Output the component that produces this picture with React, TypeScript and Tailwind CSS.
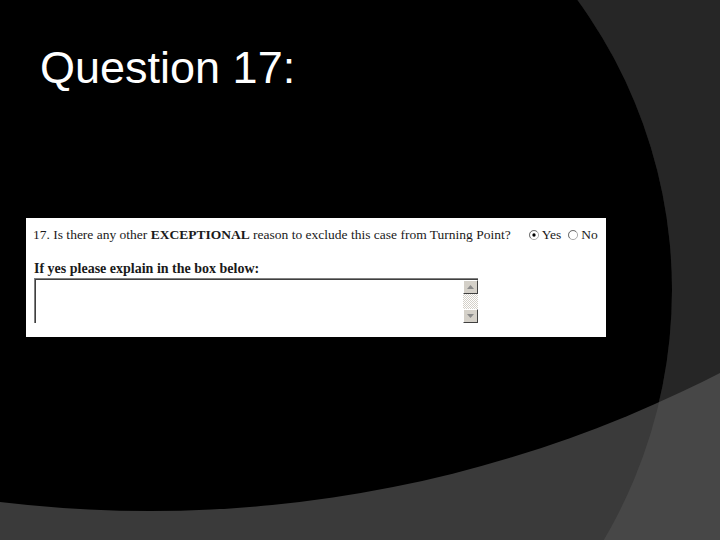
import React from "react";

// Slide backdrop: two big overlapping circles cut the page into four tones
const SlideBackdrop: React.FC = () => (
  <svg
    className="absolute inset-0"
    width="720"
    height="540"
    viewBox="0 0 720 540"
  >
    <defs>
      <clipPath id="upperArc">
        <circle cx="150" cy="-735" r="1246" />
      </clipPath>
    </defs>
    <rect x="0" y="0" width="720" height="540" fill="#474747" />
    <circle cx="150" cy="-735" r="1246" fill="#262626" />
    <circle cx="180" cy="290" r="492" fill="#3a3a3a" />
    <circle cx="180" cy="290" r="492" fill="#000000" clipPath="url(#upperArc)" />
  </svg>
);

const Radio: React.FC<{ checked?: boolean }> = ({ checked }) => (
  <svg width="10" height="10" viewBox="0 0 12 12" className="shrink-0">
    <circle cx="6" cy="6" r="5.5" fill="#ffffff" stroke="#9a9a9a" />
    <path d="M2.2 9.8 A5.2 5.2 0 0 1 9.8 2.2" fill="none" stroke="#6a6a6a" strokeWidth="1" />
    {checked && <circle cx="6" cy="6" r="2" fill="#000000" />}
  </svg>
);

const ScrollButton: React.FC<{ up?: boolean }> = ({ up }) => (
  <div className="flex h-[14px] w-[15px] items-center justify-center border border-t-[#ffffff] border-l-[#ffffff] border-r-[#404040] border-b-[#404040] bg-[#d4d0c8]">
    <svg width="7" height="4" viewBox="0 0 7 4">
      {up ? (
        <path d="M0 4 L3.5 0 L7 4 Z" fill="#8a8a8a" />
      ) : (
        <path d="M0 0 L3.5 4 L7 0 Z" fill="#8a8a8a" />
      )}
    </svg>
  </div>
);

const FormShot: React.FC = () => (
  <div
    className="ml-[26px] mt-[128px] h-[119px] w-[580px] overflow-hidden bg-white pt-[9px] leading-[16px] text-[#1a1a1a]"
    style={{ fontFamily: '"Liberation Serif", "Times New Roman", serif' }}
  >
    <div className="flex items-center whitespace-nowrap pl-[7px] text-[13.5px]">
      <span>
        17. Is there any other <b>EXCEPTIONAL</b> reason to exclude this case
        from Turning Point?
      </span>
      <span className="ml-[18px] flex items-center">
        <Radio checked />
        <span className="ml-[3px]">Yes</span>
      </span>
      <span className="ml-[7px] flex items-center">
        <Radio />
        <span className="ml-[3px]">No</span>
      </span>
    </div>
    <div className="mt-[18px] whitespace-nowrap pl-[8px] text-[14px] font-bold">
      If yes please explain in the box below:
    </div>
    <div className="ml-[8px] mt-[1px] flex h-[45px] w-[444px] border-l border-t border-[#808080]">
      <div className="flex flex-1 border-l border-t border-[#404040]">
        <div className="flex-1" />
        <div className="flex w-[15px] flex-col">
          <ScrollButton up />
          <div className="flex-1 bg-[repeating-conic-gradient(#d4d0c8_0%_25%,#ffffff_0%_50%)] bg-size-[2px_2px]" />
          <ScrollButton />
        </div>
      </div>
    </div>
  </div>
);

export default function App() {
  return (
    <div className="relative h-[540px] w-[720px] overflow-hidden bg-black">
      <SlideBackdrop />
      <div className="relative flex flex-col">
        <h1
          className="pl-[40px] pt-[45px] text-[45px] font-normal leading-none text-white"
          style={{ fontFamily: '"Liberation Sans", Arial, sans-serif' }}
        >
          Question 17:
        </h1>
        <FormShot />
      </div>
    </div>
  );
}
